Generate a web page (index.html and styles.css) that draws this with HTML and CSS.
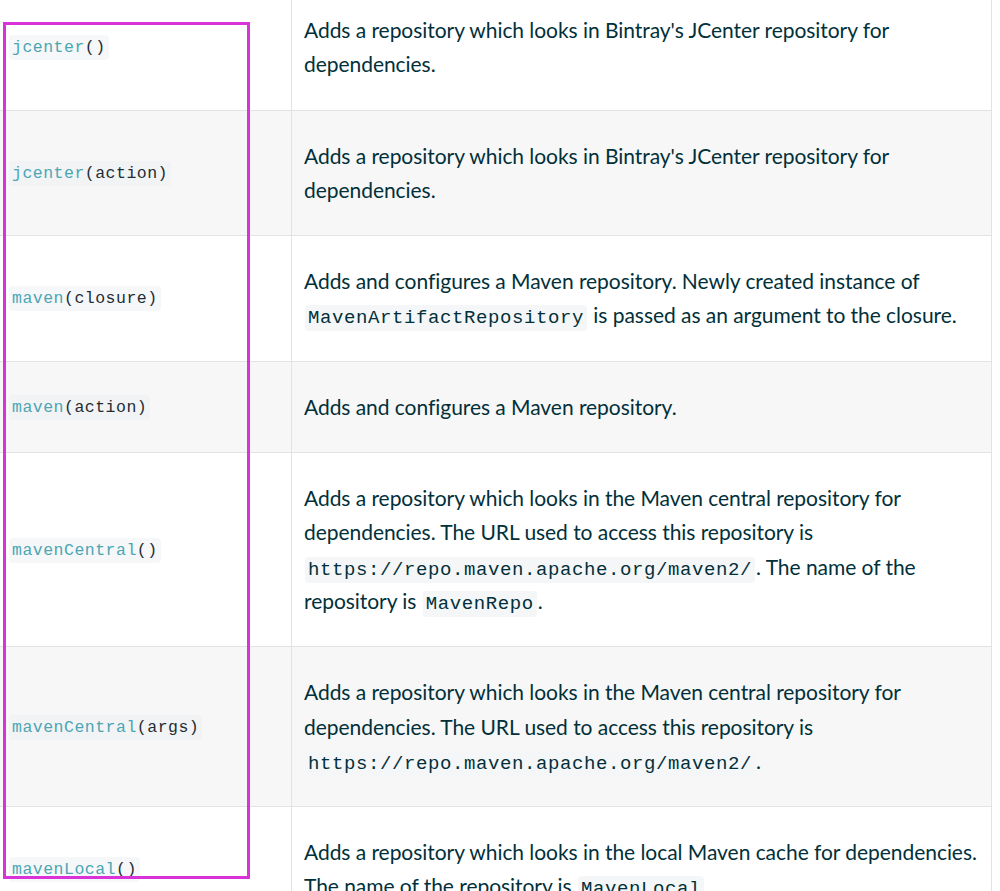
FILE: index.html
```html
<!DOCTYPE html>
<html>
<head>
<meta charset="utf-8">
<link rel="stylesheet" href="styles.css">
</head>
<body>
<div class="page">
  <table class="methods">
    <colgroup><col class="c1"><col class="c2"></colgroup>
    <tbody>
      <tr>
        <td class="sig"><code><span class="fn">jcenter</span>()</code></td>
        <td class="desc">Adds a repository which looks in Bintray's JCenter repository for dependencies.</td>
      </tr>
      <tr class="alt">
        <td class="sig"><code><span class="fn">jcenter</span>(action)</code></td>
        <td class="desc">Adds a repository which looks in Bintray's JCenter repository for dependencies.</td>
      </tr>
      <tr>
        <td class="sig"><code><span class="fn">maven</span>(closure)</code></td>
        <td class="desc">Adds and configures a Maven repository. Newly created instance of <code class="lit">MavenArtifactRepository</code> is passed as an argument to the closure.</td>
      </tr>
      <tr class="alt">
        <td class="sig"><code><span class="fn">maven</span>(action)</code></td>
        <td class="desc">Adds and configures a Maven repository.</td>
      </tr>
      <tr>
        <td class="sig"><code><span class="fn">mavenCentral</span>()</code></td>
        <td class="desc">Adds a repository which looks in the Maven central repository for dependencies. The URL used to access this repository is <code class="lit">https://repo.maven.apache.org/maven2/</code>. The name of the repository is <code class="lit">MavenRepo</code>.</td>
      </tr>
      <tr class="alt">
        <td class="sig"><code><span class="fn">mavenCentral</span>(args)</code></td>
        <td class="desc">Adds a repository which looks in the Maven central repository for dependencies. The URL used to access this repository is <code class="lit">https://repo.maven.apache.org/maven2/</code>.</td>
      </tr>
      <tr>
        <td class="sig"><code><span class="fn">mavenLocal</span>()</code></td>
        <td class="desc">Adds a repository which looks in the local Maven cache for dependencies. The name of the repository is <code class="lit">MavenLocal</code>.</td>
      </tr>
    </tbody>
  </table>
  <div class="highlight"></div>
</div>
</body>
</html>
```

FILE: styles.css
```css
html, body {
  margin: 0;
  padding: 0;
  background: #ffffff;
}
body {
  font-family: Lato, "Noto Sans", sans-serif;
  color: #02303a;
  overflow: hidden;
}
.page {
  position: relative;
  height: 891px;
  overflow: hidden;
}
.methods {
  border-collapse: collapse;
  margin-top: -16px;
  margin-left: -4px;
  width: 995px;
  table-layout: fixed;
}
.c1 { width: 295px; }
.c2 { width: 700px; }
.methods td {
  border: 1px solid #e3e3e3;
  vertical-align: middle;
}
.methods tr.alt td {
  background: #f7f7f7;
}
.sig {
  padding: 0 8px 0 12px;
}
.desc {
  padding: 28px 3px 28px 12px;
  font-size: 21px;
  line-height: 34.3px;
  letter-spacing: -0.05px;
}
.sig code {
  font-family: "Liberation Mono", "DejaVu Sans Mono", monospace;
  font-size: 16.5px;
  letter-spacing: 0.5px;
  color: #1f2c33;
  background: #f6f7f8;
  padding: 3px 3px;
  border-radius: 4px;
  line-height: 20px;
}
.methods tr.alt .sig code {
  background: #f2f3f4;
}
.sig .fn {
  color: #4aa6b4;
}
code.lit {
  font-family: "Liberation Mono", "DejaVu Sans Mono", monospace;
  font-size: 19px;
  line-height: 1;
  letter-spacing: 0.6px;
  color: #02303a;
  background: #f5f6f7;
  padding: 2px 3px;
  border-radius: 4px;
  margin: 0 1px;
}
.highlight {
  position: absolute;
  left: 3px;
  top: 22px;
  width: 247px;
  height: 857px;
  box-sizing: border-box;
  border: 3px solid #d832d8;
}
```
